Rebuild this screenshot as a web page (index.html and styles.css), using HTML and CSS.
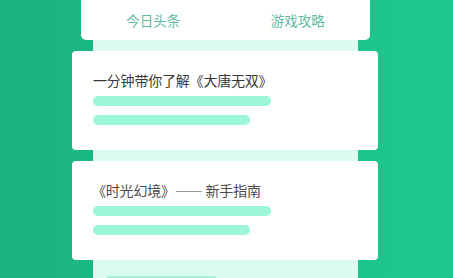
FILE: index.html
```html
<!DOCTYPE html>
<html lang="zh">
<head>
<meta charset="utf-8">
<link rel="stylesheet" href="styles.css">
</head>
<body>
<div class="screen">
  <div class="column">
    <nav class="tabs">
      <div class="tab">今日头条</div>
      <div class="tab">游戏攻略</div>
    </nav>
    <div class="sheet">
      <article class="card">
        <h2 class="title">一分钟带你了解《大唐无双》</h2>
        <div class="bar bar-long"></div>
        <div class="bar bar-short"></div>
      </article>
      <article class="card">
        <h2 class="title title-2">《时光幻境》—— 新手指南</h2>
        <div class="bar bar-long"></div>
        <div class="bar bar-short"></div>
      </article>
      <div class="peek">
        <div class="peek-bar"></div>
      </div>
    </div>
  </div>
</div>
</body>
</html>
```

FILE: styles.css
```css
* { box-sizing: border-box; }
html, body { margin: 0; padding: 0; }
body {
  width: 453px;
  height: 278px;
  overflow: hidden;
  font-family: "Noto Sans CJK SC", "Noto Sans", sans-serif;
}
.screen {
  width: 453px;
  height: 278px;
  overflow: hidden;
  background: linear-gradient(90deg, #1ab281 0%, #1dbf88 50%, #1fc98d 100%);
  display: flex;
  flex-direction: column;
  padding-left: 81px;
}
.column {
  width: 289px;
  flex-shrink: 0;
  display: flex;
  flex-direction: column;
}
.tabs {
  height: 40px;
  flex-shrink: 0;
  background: #ffffff;
  border-radius: 0 0 5px 5px;
  display: flex;
}
.tab {
  flex: 1;
  display: flex;
  align-items: center;
  justify-content: center;
  font-size: 13.5px;
  color: #62bca3;
  padding-bottom: 1px;
}
.sheet {
  margin: 0 12px 0 12px;
  width: 265px;
  flex-shrink: 0;
  background: #dcfbef;
  padding-top: 11px;
  display: flex;
  flex-direction: column;
  gap: 11px;
  height: 250px;
}
.card {
  flex-shrink: 0;
  margin: 0 -20px 0 -21px;
  height: 99px;
  background: #ffffff;
  border-radius: 4px;
  padding: 21px 0 0 21px;
  display: flex;
  flex-direction: column;
}
.title {
  margin: 0;
  font-weight: 400;
  font-size: 14px;
  line-height: 16px;
  height: 16px;
  color: #3a3a3a;
  letter-spacing: -0.2px;
  white-space: nowrap;
}
.title-2 { margin-left: -1px; color: #4a4a4a; }
.bar {
  height: 10px;
  border-radius: 5px;
  background: #9df6d9;
  flex-shrink: 0;
}
.bar-long { width: 178px; margin-top: 8px; }
.bar-short { width: 157px; margin-top: 9px; }
.peek {
  flex-shrink: 0;
  padding-left: 12px;
  padding-top: 5px;
}
.peek-bar {
  width: 113px;
  height: 10px;
  border-radius: 5px;
  background: #a6f3d9;
}
```
